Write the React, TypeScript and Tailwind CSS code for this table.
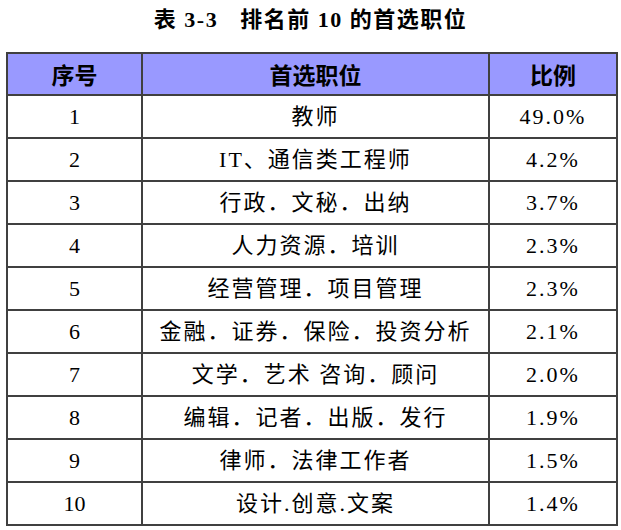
const rows: [string, string, string][] = [
  ['1', '教师', '49.0%'],
  ['2', 'IT、通信类工程师', '4.2%'],
  ['3', '行政．文秘．出纳', '3.7%'],
  ['4', '人力资源．培训', '2.3%'],
  ['5', '经营管理．项目管理', '2.3%'],
  ['6', '金融．证券．保险．投资分析', '2.1%'],
  ['7', '文学．艺术 咨询．顾问', '2.0%'],
  ['8', '编辑．记者．出版．发行', '1.9%'],
  ['9', '律师．法律工作者', '1.5%'],
  ['10', '设计.创意.文案', '1.4%'],
];

export default function App() {
  return (
    <div className="w-[621px] h-[530px] bg-white text-black overflow-hidden" style={{ fontFamily: '"Liberation Serif", "Noto Sans CJK SC", serif' }}>
      <div className="h-[52px] flex items-start justify-center pt-[6px]">
        <h1 className="text-[22px] font-bold leading-[28px] tracking-[1.5px]">
          表 3-3<span className="inline-block w-[22px]" />排名前 10 的首选职位
        </h1>
      </div>
      <table className="ml-[6px] border-collapse table-fixed w-[610px]">
        <colgroup>
          <col className="w-[135px]" />
          <col className="w-[347px]" />
          <col className="w-[128px]" />
        </colgroup>
        <thead>
          <tr className="h-[42px] bg-[#9999ff]">
            {['序号', '首选职位', '比例'].map((h) => (
              <th key={h} className="border-2 border-[#404040] text-[23px] font-bold" style={{ fontFamily: '"Noto Sans CJK SC", sans-serif' }}>
                {h}
              </th>
            ))}
          </tr>
        </thead>
        <tbody>
          {rows.map(([n, job, pct]) => (
            <tr key={n} className="h-[43px]">
              <td className="border-2 border-[#404040] text-center text-[22px] font-normal">{n}</td>
              <td className="border-2 border-[#404040] text-center text-[22px] tracking-[2px]">{job}</td>
              <td className="border-2 border-[#404040] text-center text-[22px] tracking-[2px]">{pct}</td>
            </tr>
          ))}
        </tbody>
      </table>
    </div>
  );
}
